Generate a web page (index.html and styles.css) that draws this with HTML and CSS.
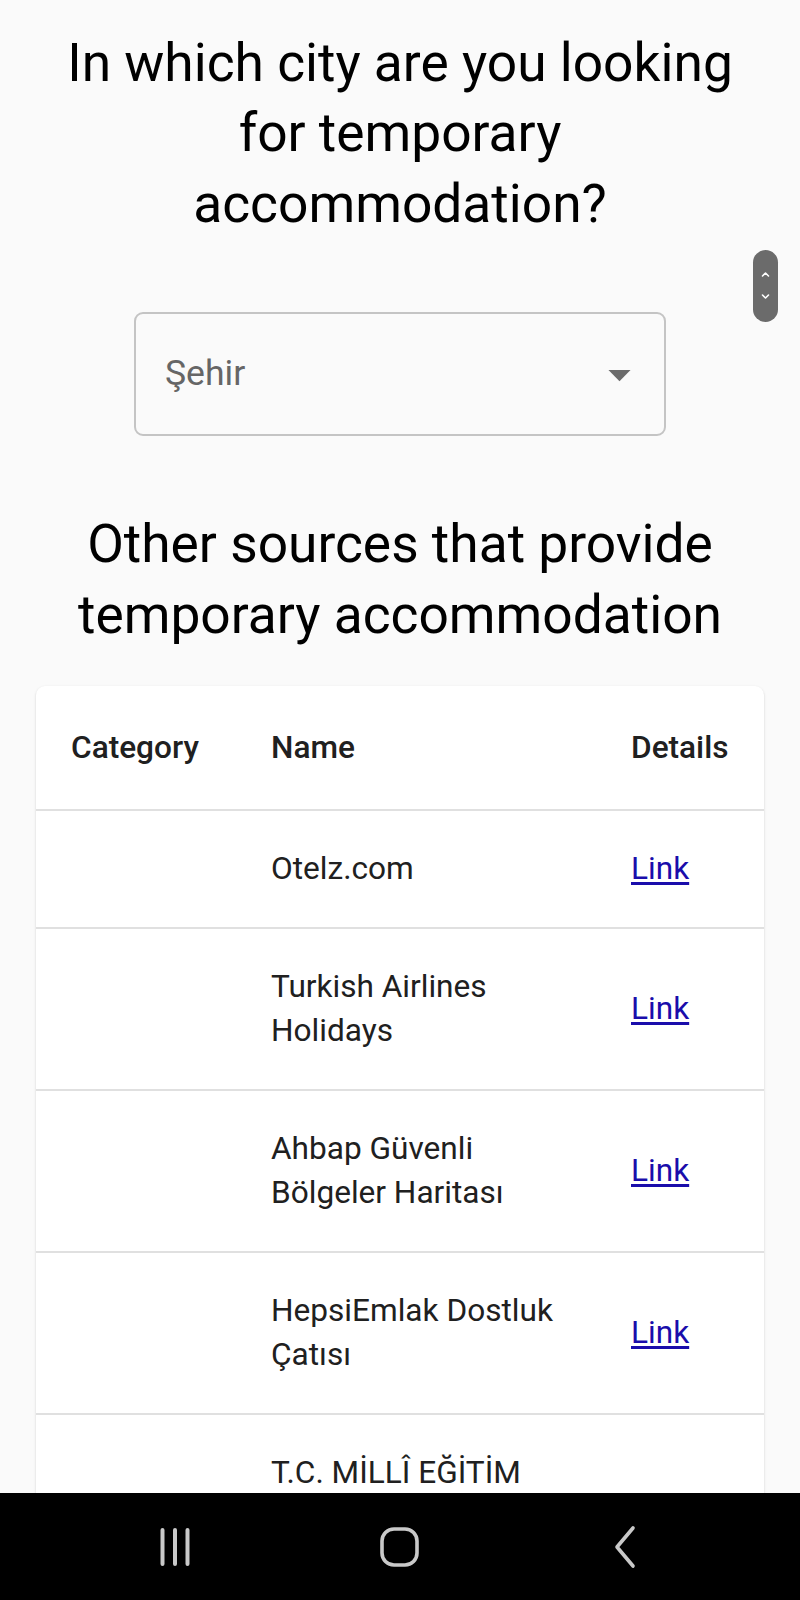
FILE: index.html
```html
<!DOCTYPE html>
<html lang="en">
<head>
<meta charset="utf-8">
<title>Temporary accommodation</title>
<link rel="stylesheet" href="styles.css">
</head>
<body>
<main class="page">
  <h1 class="heading">In which city are you looking for temporary accommodation?</h1>

  <div class="select">
    <span class="select-label">Şehir</span>
    <svg class="select-arrow" viewBox="0 0 24 24" width="53" height="53" aria-hidden="true"><path d="M7 10l5 5 5-5z" fill="#6b6b6b"/></svg>
  </div>

  <h2 class="heading heading-second">Other sources that provide temporary accommodation</h2>

  <div class="card">
    <table class="table">
      <colgroup>
        <col class="col-cat">
        <col class="col-name">
        <col class="col-det">
      </colgroup>
      <thead>
        <tr><th>Category</th><th>Name</th><th>Details</th></tr>
      </thead>
      <tbody>
        <tr><td></td><td>Otelz.com</td><td><a href="#">Link</a></td></tr>
        <tr><td></td><td>Turkish Airlines Holidays</td><td><a href="#">Link</a></td></tr>
        <tr><td></td><td>Ahbap Güvenli Bölgeler Haritası</td><td><a href="#">Link</a></td></tr>
        <tr><td></td><td>HepsiEmlak Dostluk Çatısı</td><td><a href="#">Link</a></td></tr>
        <tr><td></td><td>T.C. MİLLÎ EĞİTİM BAKANLIĞI Öğretmenevleri Listesi</td><td><a href="#">Link</a></td></tr>
      </tbody>
    </table>
  </div>
</main>

<div class="scroller" aria-hidden="true">
  <svg viewBox="0 0 25 72" width="25" height="72">
    <path d="M9.5 26 L12.5 23 L15.5 26" fill="none" stroke="#fff" stroke-width="1.6" stroke-linecap="round" stroke-linejoin="round"/>
    <path d="M9.5 45 L12.5 48 L15.5 45" fill="none" stroke="#fff" stroke-width="1.6" stroke-linecap="round" stroke-linejoin="round"/>
  </svg>
</div>

<nav class="navbar" aria-label="System navigation">
  <span class="nav-item">
    <svg viewBox="0 0 40 40" width="40" height="40"><path d="M6.5 3v34M19 3v34M31.5 3v34" stroke="#c9c9c9" stroke-width="4" stroke-linecap="round" fill="none"/></svg>
  </span>
  <span class="nav-item">
    <svg viewBox="0 0 40 40" width="40" height="40"><rect x="2" y="2" width="35" height="36" rx="12" fill="none" stroke="#c9c9c9" stroke-width="3.6"/></svg>
  </span>
  <span class="nav-item">
    <svg viewBox="0 0 40 44" width="40" height="44"><path d="M29 3 L13 22 L29 41" fill="none" stroke="#c9c9c9" stroke-width="3.6" stroke-linecap="round" stroke-linejoin="round"/></svg>
  </span>
</nav>
</body>
</html>
```

FILE: styles.css
```css
html, body {
  margin: 0;
  padding: 0;
}

body {
  background: #fafafa;
  font-family: Roboto, "Liberation Sans", Arial, sans-serif;
  color: rgba(0, 0, 0, 0.87);
  min-height: 1600px;
}

.page {
  padding: 28px 36px 200px;
}

.heading {
  margin: 0;
  font-size: 53.3px;
  line-height: 70.4px;
  font-weight: 400;
  text-align: center;
  color: #000;
}

.heading-second {
  margin-top: 73px;
}

.select {
  box-sizing: border-box;
  width: 532px;
  height: 124px;
  margin: 73px auto 0;
  border: 2px solid #c4c4c4;
  border-radius: 9px;
  display: flex;
  align-items: center;
  justify-content: space-between;
  padding: 0 18px 0 29px;
}

.select-label {
  font-size: 35.6px;
  color: #666;
  line-height: 1;
}

.select-arrow {
  display: block;
}

.card {
  margin-top: 36px;
  background: #fff;
  border-radius: 9px;
  box-shadow: 0 2px 1px -1px rgba(0,0,0,0.2), 0 1px 1px 0 rgba(0,0,0,0.14), 0 1px 3px 0 rgba(0,0,0,0.12);
  overflow: hidden;
}

.table {
  width: 100%;
  border-collapse: collapse;
  table-layout: fixed;
}

.col-cat { width: 200px; }
.col-name { width: 360px; }
.col-det { width: 168px; }

.table th,
.table td {
  text-align: left;
  font-size: 31.6px;
  padding: 36px 35px;
  border-bottom: 2px solid #e0e0e0;
  vertical-align: middle;
  color: #202020;
}

.table th {
  font-weight: 500;
  line-height: 52px;
  padding-top: 36px;
  padding-bottom: 35px;
}

.table td {
  font-weight: 400;
  line-height: 44px;
}

.table a {
  color: #1a0dab;
  text-decoration: underline;
  text-underline-offset: 3px;
}

.scroller {
  position: absolute;
  left: 753px;
  top: 250px;
  width: 25px;
  height: 72px;
  border-radius: 13px;
  background: #6b6b6b;
}

.scroller svg {
  display: block;
}

.navbar {
  position: fixed;
  left: 0;
  right: 0;
  bottom: 0;
  height: 107px;
  background: #000;
  display: grid;
  grid-template-columns: 224px 224px 224px;
  justify-content: center;
  align-items: center;
}

.nav-item {
  display: flex;
  justify-content: center;
  align-items: center;
}

.nav-item svg {
  display: block;
}
```
